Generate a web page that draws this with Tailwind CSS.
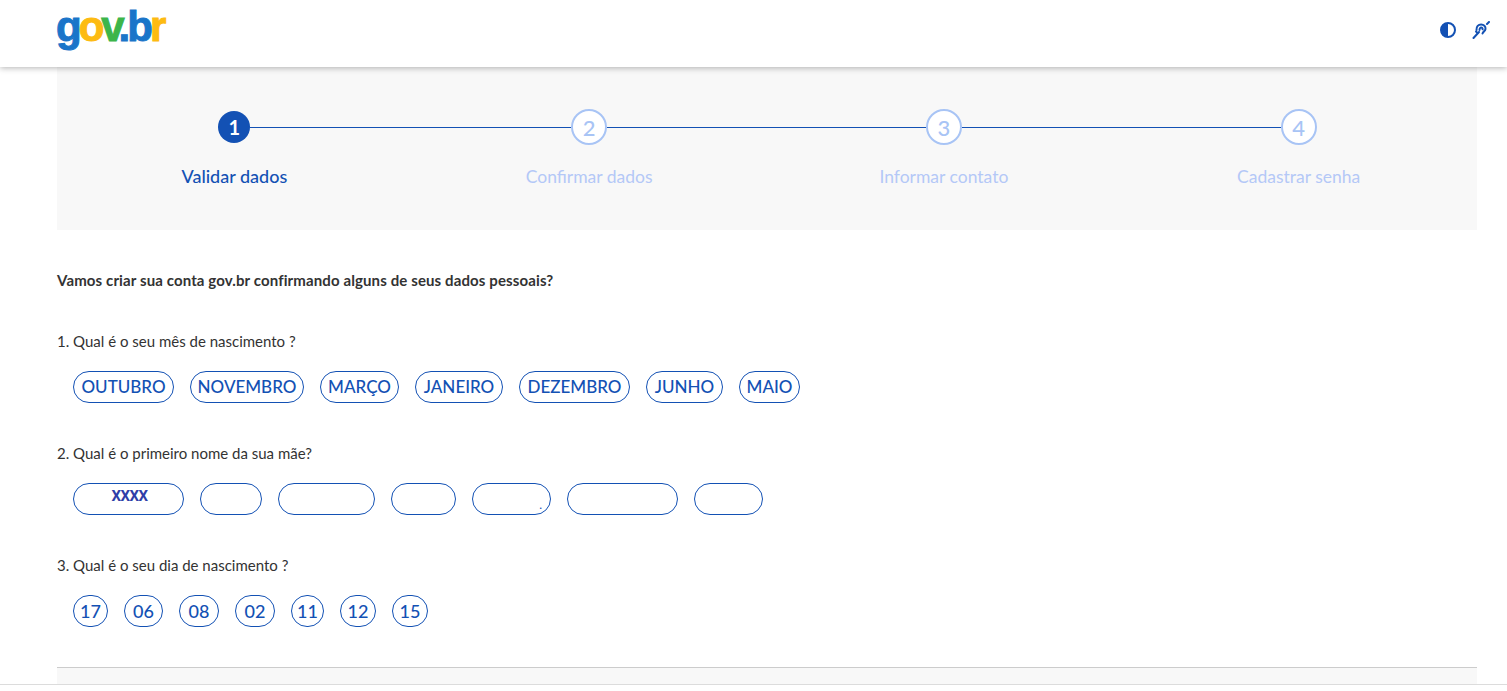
<!DOCTYPE html>
<html lang="pt-BR">
  <head>
    <meta charset="UTF-8" />
    <title>gov.br</title>
    <script src="https://cdn.jsdelivr.net/npm/@tailwindcss/browser@4"></script>
  </head>
  <body class="bg-white h-[691px] overflow-hidden font-['Lato','Open_Sans',sans-serif] text-[#333]">
    <header class="relative z-10 h-[67px] bg-white shadow-[0_1px_6px_rgba(0,0,0,0.3)] pl-[56px] pr-[17px] flex items-start justify-between">
      <div class="font-['Liberation_Sans',sans-serif] font-bold text-[42px] leading-[53px] tracking-[-3px] h-[53px] [-webkit-text-stroke:1px_currentColor]">
        <span class="text-[#1a75c9]">g</span><span class="text-[#fdbb12]">o</span><span class="text-[#3cb54a]">v</span><span class="text-[#1a75c9]">.b</span><span class="text-[#fdbb12]">r</span>
      </div>
      <div class="flex items-center gap-[16px] h-[60px] text-[#1351b4]">
        <svg class="w-[16px] h-[16px]" viewBox="0 0 16 16">
          <circle cx="8" cy="8" r="7" fill="none" stroke="currentColor" stroke-width="2" />
          <path d="M8 1a7 7 0 0 0 0 14z" fill="currentColor" />
        </svg>
        <svg class="w-[18px] h-[18px]" viewBox="0 0 18 18" fill="none" stroke="currentColor" stroke-width="2" stroke-linecap="round">
          <path d="M4.500 9c-.3-3.500 1.900-5.500 4.600-5.500s4.600 2 4.400 4.300c-.2 2.200-2.400 2.900-3 4.700" />
          <path d="M7.500 9c0-1.500.7-2.400 1.700-2.400s1.500.8 1.400 1.700" />
          <path d="M17 1l-2 2" />
          <path d="M7 11l-5.500 6" />
          <path d="M4 10.500l1.500 1.500" />
        </svg>
      </div>
    </header>

    <main class="pl-[57px] pr-[30px]">
      <section class="h-[163px] bg-[#f8f8f8] grid grid-cols-4 pt-[42px] pr-[1px]">
        <div class="flex flex-col items-center">
          <div class="w-full h-[36px] flex items-center">
            <div class="flex-1"></div>
            <div class="w-[32px] h-[32px] rounded-full bg-[#1351b4] text-white font-bold text-[20px] flex items-center justify-center">1</div>
            <div class="flex-1 h-px bg-[#1351b4]"></div>
          </div>
          <p class="mt-[19px] text-[18px] leading-[24px] font-medium text-[#1351b4]">Validar dados</p>
        </div>
        <div class="flex flex-col items-center">
          <div class="w-full h-[36px] flex items-center">
            <div class="flex-1 h-px bg-[#1351b4]"></div>
            <div class="w-[36px] h-[36px] rounded-full bg-white border-2 border-[#a8c4f5] text-[#a8c4f5] font-medium text-[22px] flex items-center justify-center">2</div>
            <div class="flex-1 h-px bg-[#1351b4]"></div>
          </div>
          <p class="mt-[20px] text-[17.5px] leading-[24px] text-[#b4c8f7]">Confirmar dados</p>
        </div>
        <div class="flex flex-col items-center">
          <div class="w-full h-[36px] flex items-center">
            <div class="flex-1 h-px bg-[#1351b4]"></div>
            <div class="w-[36px] h-[36px] rounded-full bg-white border-2 border-[#a8c4f5] text-[#a8c4f5] font-medium text-[22px] flex items-center justify-center">3</div>
            <div class="flex-1 h-px bg-[#1351b4]"></div>
          </div>
          <p class="mt-[20px] text-[17.5px] leading-[24px] text-[#b4c8f7]">Informar contato</p>
        </div>
        <div class="flex flex-col items-center">
          <div class="w-full h-[36px] flex items-center">
            <div class="flex-1 h-px bg-[#1351b4]"></div>
            <div class="w-[36px] h-[36px] rounded-full bg-white border-2 border-[#a8c4f5] text-[#a8c4f5] font-medium text-[22px] flex items-center justify-center">4</div>
            <div class="flex-1"></div>
          </div>
          <p class="mt-[20px] text-[17.5px] leading-[24px] text-[#b4c8f7]">Cadastrar senha</p>
        </div>
      </section>

      <p class="mt-[40px] text-[15px] leading-[20px] font-bold tracking-[0.12px]">Vamos criar sua conta gov.br confirmando alguns de seus dados pessoais?</p>

      <p class="mt-[41px] text-[15px] leading-[20px]">1. Qual é o seu mês de nascimento ?</p>
      <div class="mt-[20px] pl-[16px] flex gap-[16px] text-[#1351b4] text-[17px] font-medium">
        <span class="w-[101px] h-[32px] rounded-full border border-[#1351b4] flex items-center justify-center">OUTUBRO</span>
        <span class="w-[114px] h-[32px] rounded-full border border-[#1351b4] flex items-center justify-center">NOVEMBRO</span>
        <span class="w-[79px] h-[32px] rounded-full border border-[#1351b4] flex items-center justify-center">MARÇO</span>
        <span class="w-[88px] h-[32px] rounded-full border border-[#1351b4] flex items-center justify-center">JANEIRO</span>
        <span class="w-[111px] h-[32px] rounded-full border border-[#1351b4] flex items-center justify-center">DEZEMBRO</span>
        <span class="w-[77px] h-[32px] rounded-full border border-[#1351b4] flex items-center justify-center">JUNHO</span>
        <span class="w-[61px] h-[32px] rounded-full border border-[#1351b4] flex items-center justify-center">MAIO</span>
      </div>

      <p class="mt-[40px] text-[15px] leading-[20px]">2. Qual é o primeiro nome da sua mãe?</p>
      <div class="mt-[20px] pl-[16px] flex gap-[16px]">
        <span class="w-[111px] h-[32px] rounded-full border border-[#1351b4] flex justify-center pt-[2px] pl-[2px] text-[#2f3ea8] font-['Roboto',sans-serif] font-bold text-[15px] tracking-[-0.5px] leading-[20px]">XXXX</span>
        <span class="w-[62px] h-[32px] rounded-full border border-[#1351b4]"></span>
        <span class="w-[97px] h-[32px] rounded-full border border-[#1351b4]"></span>
        <span class="w-[65px] h-[32px] rounded-full border border-[#1351b4]"></span>
        <span class="w-[79px] h-[32px] rounded-full border border-[#1351b4] flex justify-end items-end pr-[8px] pb-[2px] text-[#1351b4] text-[12px] leading-[14px]">.</span>
        <span class="w-[111px] h-[32px] rounded-full border border-[#1351b4]"></span>
        <span class="w-[69px] h-[32px] rounded-full border border-[#1351b4]"></span>
      </div>

      <p class="mt-[40px] text-[15px] leading-[20px]">3. Qual é o seu dia de nascimento ?</p>
      <div class="mt-[20px] pl-[16px] flex gap-[16px] text-[#1351b4] text-[18px] font-medium">
        <span class="w-[35px] h-[32px] rounded-full border border-[#1351b4] flex items-center justify-center">17</span>
        <span class="w-[39px] h-[32px] rounded-full border border-[#1351b4] flex items-center justify-center">06</span>
        <span class="w-[40px] h-[32px] rounded-full border border-[#1351b4] flex items-center justify-center">08</span>
        <span class="w-[40px] h-[32px] rounded-full border border-[#1351b4] flex items-center justify-center">02</span>
        <span class="w-[33px] h-[32px] rounded-full border border-[#1351b4] flex items-center justify-center">11</span>
        <span class="w-[36px] h-[32px] rounded-full border border-[#1351b4] flex items-center justify-center">12</span>
        <span class="w-[36px] h-[32px] rounded-full border border-[#1351b4] flex items-center justify-center">15</span>
      </div>
    </main>

    <footer class="mt-[40px] border-b border-[#dcdcdc] pl-[57px] pr-[30px]">
      <div class="h-[17px] bg-[#f8f8f8] border-t border-[#ccc]"></div>
    </footer>
  </body>
</html>
